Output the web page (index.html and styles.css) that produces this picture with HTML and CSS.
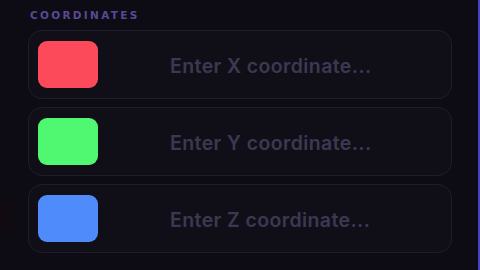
FILE: index.html
```html
<!DOCTYPE html>
<html>
<head>
<meta charset="utf-8">
<link rel="stylesheet" href="styles.css">
</head>
<body>
<div class="panel">
  <div class="label">COORDINATES</div>
  <div class="list">
    <div class="field">
      <div class="swatch swatch-x"></div>
      <input class="input" type="text" placeholder="Enter X coordinate...">
    </div>
    <div class="field">
      <div class="swatch swatch-y"></div>
      <input class="input" type="text" placeholder="Enter Y coordinate...">
    </div>
    <div class="field">
      <div class="swatch swatch-z"></div>
      <input class="input" type="text" placeholder="Enter Z coordinate...">
    </div>
  </div>
</div>
</body>
</html>
```
FILE: styles.css
```css
html, body {
  margin: 0;
  padding: 0;
}
body {
  width: 480px;
  height: 270px;
  box-sizing: border-box;
  background: radial-gradient(circle at 0px 215px, rgba(30, 6, 10, 0.35), rgba(0,0,0,0) 25px), #0d0c14;
  border-right: 2px solid #4b40c0;
  overflow: hidden;
  font-family: "Inter", "DejaVu Sans", sans-serif;
}
.panel {
  padding: 9px 0 0 28px;
  width: 424px;
}
.label {
  margin-left: 2px;
  font-family: "DejaVu Sans", sans-serif;
  font-weight: bold;
  font-size: 10.5px;
  line-height: 12px;
  letter-spacing: 2.3px;
  color: #5a4896;
  margin-bottom: 9px;
}
.list {
  display: flex;
  flex-direction: column;
  gap: 8px;
}
.field {
  height: 69px;
  box-sizing: border-box;
  border: 1px solid #1f1d2b;
  border-radius: 14px;
  background: #100f18;
  display: flex;
  align-items: center;
  padding-left: 9px;
}
.swatch {
  width: 60px;
  height: 47px;
  border-radius: 9px;
  flex: none;
}
.swatch-x { background: #fc4a5b; }
.swatch-y { background: #50f872; }
.swatch-z { background: #4f8bfa; }
.input {
  flex: 1;
  min-width: 0;
  background: transparent;
  border: none;
  outline: none;
  padding: 3px 0 0 72px;
  font-family: "Inter", sans-serif;
  font-weight: 600;
  font-size: 19.5px;
  letter-spacing: 0.4px;
  color: #3d3852;
}
.input::placeholder {
  color: #3d3852;
  opacity: 1;
}
```
